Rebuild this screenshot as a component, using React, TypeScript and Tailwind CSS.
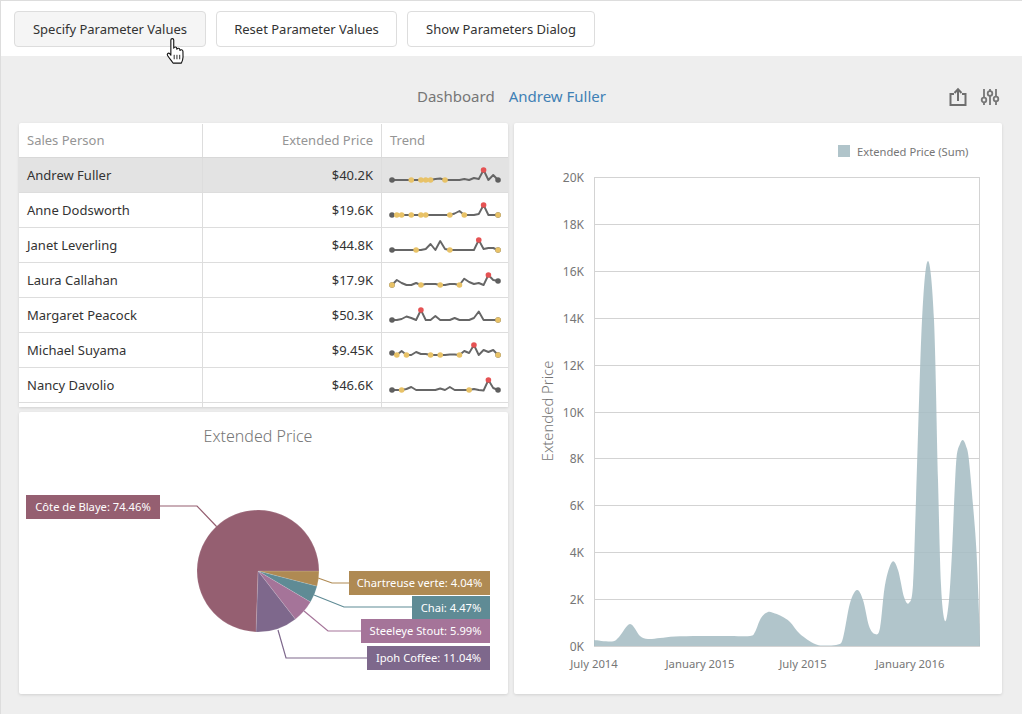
const font = { fontFamily: '"Noto Sans", "Open Sans", sans-serif' };

type Row = { name: string; price: string; ys: number[]; yellow: number[]; red: number };

const rows: Row[] = [
  { name: 'Andrew Fuller', price: '$40.2K', red: 19, yellow: [4, 6, 7, 8, 11],
    ys: [180, 180, 180, 180, 180, 180, 180, 180, 180, 179, 178.5, 180, 180, 180, 180, 179, 180, 178, 179, 170, 180, 175, 180] },
  { name: 'Anne Dodsworth', price: '$19.6K', red: 19, yellow: [1, 2, 4, 6, 7, 12, 15, 22],
    ys: [215, 215, 215, 215, 215, 215, 215, 215, 215, 215, 215, 215, 215, 213.5, 211, 215, 215, 215, 214, 205, 215, 215, 215] },
  { name: 'Janet Leverling', price: '$44.8K', red: 18, yellow: [5, 12, 22],
    ys: [250, 250, 250, 250, 250, 250, 250, 249, 244, 250, 241, 249, 250, 250, 250, 250, 250, 250, 240, 249, 248, 248, 250] },
  { name: 'Laura Callahan', price: '$17.9K', red: 20, yellow: [0, 6, 10, 14],
    ys: [285, 280, 283, 285, 285, 283, 285, 284, 284, 284, 285, 285, 284, 284, 285, 278.7, 282, 284, 283, 285, 275, 280, 281] },
  { name: 'Margaret Peacock', price: '$50.3K', red: 6, yellow: [22],
    ys: [320, 320, 319, 316.5, 318, 320, 310, 320, 320, 316, 320, 320, 320, 318, 320, 320, 320, 318, 311.5, 320, 320, 320, 320] },
  { name: 'Michael Suyama', price: '$9.45K', red: 17, yellow: [1, 3, 8, 10, 14, 22],
    ys: [353, 355, 351, 355, 355, 352, 354, 354, 355, 355, 355, 355, 354.5, 354.5, 355, 351, 353, 345, 355, 350, 352, 350, 355] },
  { name: 'Nancy Davolio', price: '$46.6K', red: 20, yellow: [2, 16],
    ys: [390, 390, 390, 389, 387, 390, 390, 390, 390, 390, 388.5, 390, 387, 390, 390, 390, 390, 389, 390, 390.5, 380, 388, 390] },
];

function Sparkline({ row, top }: { row: Row; top: number }) {
  const xs = row.ys.map((_, i) => 392 + i * 4.82);
  const last = row.ys.length - 1;
  return (
    <svg width="126" height="34" viewBox={`382 ${top} 126 34`}>
      <polyline
        points={row.ys.map((y, i) => `${xs[i]},${y}`).join(' ')}
        fill="none"
        stroke="#666666"
        strokeWidth="1.9"
        strokeLinejoin="round"
      />
      {[0, last].map((i) => (
        <circle key={i} cx={xs[i]} cy={row.ys[i]} r="2.8" fill="#5f5f5f" />
      ))}
      {row.yellow.map((i) => (
        <circle key={i} cx={xs[i]} cy={row.ys[i]} r="2.8" fill="#e8c267" />
      ))}
      <circle cx={xs[row.red]} cy={row.ys[row.red]} r="2.8" fill="#e55253" />
    </svg>
  );
}

function Grid() {
  return (
    <div className="h-[284px] overflow-hidden rounded-t-[2px] bg-white shadow-[0_1px_3px_rgba(0,0,0,0.12)]">
      <div className="flex h-[35px] border-b border-[#d8d8d8] pt-px text-[13px] text-[#959595]">
        <div className="flex w-[184px] items-center border-r border-[#dddddd] pl-2">Sales Person</div>
        <div className="flex w-[179px] items-center justify-end border-r border-[#dddddd] pr-2">Extended Price</div>
        <div className="flex flex-1 items-center pl-2">Trend</div>
      </div>
      {rows.map((row, i) => (
        <div
          key={row.name}
          className={`flex h-[35px] border-b border-[#dddddd] text-[13px] text-[#333333] ${i === 0 ? 'bg-[#e3e3e3]' : ''}`}
        >
          <div className="flex w-[184px] items-center border-r border-[#dddddd] pl-2 pt-px">{row.name}</div>
          <div className="flex w-[179px] items-center justify-end border-r border-[#dddddd] pr-2 pt-px">{row.price}</div>
          <div className="flex-1">
            <Sparkline row={row} top={158 + i * 35} />
          </div>
        </div>
      ))}
      <div className="flex h-[10px]">
        <div className="w-[184px] border-r border-[#dddddd]" />
        <div className="w-[179px] border-r border-[#dddddd]" />
      </div>
    </div>
  );
}

const slices = [
  { from: 0, to: 14.5, color: '#af8a53' },
  { from: 14.5, to: 30.6, color: '#5f8b95' },
  { from: 30.6, to: 52.2, color: '#a57499' },
  { from: 52.2, to: 91.9, color: '#7e688c' },
  { from: 91.9, to: 360, color: '#955f71' },
];

const pieLabels = [
  { text: 'Côte de Blaye: 74.46%', x: 26, y: 495, w: 134, color: '#955f71', line: '160,506 197,506 217,527' },
  { text: 'Chartreuse verte: 4.04%', x: 349, y: 571, w: 141, color: '#af8a53', line: '318,578 332,583 349,583' },
  { text: 'Chai: 4.47%', x: 412, y: 596, w: 78, color: '#5f8b95', line: '314,595 344,607 412,607' },
  { text: 'Steeleye Stout: 5.99%', x: 361, y: 619, w: 129, color: '#a57499', line: '304,611 328,631 361,631' },
  { text: 'Ipoh Coffee: 11.04%', x: 367, y: 646, w: 123, color: '#7e688c', line: '278,630 286,658 367,658' },
];

function slicePath(from: number, to: number) {
  const cx = 258;
  const cy = 571;
  const r = 61;
  const a = (from * Math.PI) / 180;
  const b = (to * Math.PI) / 180;
  const large = to - from > 180 ? 1 : 0;
  return `M${cx},${cy} L${cx + r * Math.cos(a)},${cy + r * Math.sin(a)} A${r},${r} 0 ${large} 1 ${cx + r * Math.cos(b)},${cy + r * Math.sin(b)} Z`;
}

function PieCard() {
  return (
    <div className="h-[282px] rounded-[2px] bg-white shadow-[0_1px_3px_rgba(0,0,0,0.12)]">
      <svg width="489" height="282" viewBox="19 412 489 282" style={font}>
        <text x="258" y="442" textAnchor="middle" fontSize="16" fontWeight="300" fill="#767676">
          Extended Price
        </text>
        {pieLabels.map((l) => (
          <polyline key={l.text} points={l.line} fill="none" stroke={l.color} strokeWidth="1.2" />
        ))}
        {slices.map((s) => (
          <path key={s.from} d={slicePath(s.from, s.to)} fill={s.color} stroke="#ffffff" strokeOpacity="0.25" strokeWidth="0.5" />
        ))}
        {pieLabels.map((l) => (
          <g key={l.text}>
            <rect x={l.x} y={l.y} width={l.w} height="24" fill={l.color} />
            <text x={l.x + l.w / 2} y={l.y + 16} textAnchor="middle" fontSize="11.2" fill="#ffffff">
              {l.text}
            </text>
          </g>
        ))}
      </svg>
    </div>
  );
}

const areaPoints: [number, number][] = [
  [594, 640], [612, 641.5], [619, 637], [630, 624], [640, 636], [648, 639], [660, 638], [675, 636.5],
  [700, 636], [730, 636], [750, 636], [755, 632], [761, 618], [768, 612], [775, 613.5], [782, 616.5], [790, 622], [800, 634], [815, 644],
  [825, 645.5], [838, 644.5], [843, 638], [850, 603], [857, 590], [863, 600], [869, 626], [875, 634],
  [880, 628], [885, 585], [892, 562], [898, 570], [904, 597], [909, 603], [913, 585], [916, 500],
  [922, 320], [928, 261], [934, 320], [938, 480], [941, 585], [945, 621], [949, 600], [952, 552],
  [954, 505], [956.5, 458], [960, 444], [963, 440], [966, 446], [968.7, 458], [973, 505], [976.5, 552], [979.5, 625],
];

function spline(pts: [number, number][]) {
  let d = `M${pts[0][0]},${pts[0][1]}`;
  for (let i = 0; i < pts.length - 1; i++) {
    const p0 = pts[Math.max(i - 1, 0)];
    const p1 = pts[i];
    const p2 = pts[i + 1];
    const p3 = pts[Math.min(i + 2, pts.length - 1)];
    d += ` C${p1[0] + (p2[0] - p0[0]) / 6},${p1[1] + (p2[1] - p0[1]) / 6} ${p2[0] - (p3[0] - p1[0]) / 6},${p2[1] - (p3[1] - p1[1]) / 6} ${p2[0]},${p2[1]}`;
  }
  return d;
}

const yTicks = [20, 18, 16, 14, 12, 10, 8, 6, 4, 2, 0];
const xTicks = [
  { text: 'July 2014', x: 594 },
  { text: 'January 2015', x: 700 },
  { text: 'July 2015', x: 803 },
  { text: 'January 2016', x: 910 },
];

function ChartCard() {
  return (
    <div className="h-[571px] w-[488px] rounded-[2px] bg-white shadow-[0_1px_3px_rgba(0,0,0,0.12)]">
      <svg width="488" height="571" viewBox="514 123 488 571" style={font}>
        <rect x="838" y="145" width="12" height="12" fill="#b0c4ca" />
        <text x="857" y="156" fontSize="11.2" fill="#767676">
          Extended Price (Sum)
        </text>
        <text transform="translate(553 411) rotate(-90)" textAnchor="middle" fontSize="14.8" fontWeight="300" fill="#767676">
          Extended Price
        </text>
        {yTicks.map((t) => {
          const y = 646 - t * 23.45;
          return (
            <g key={t}>
              <line x1="594" x2="980" y1={Math.round(y) + 0.5} y2={Math.round(y) + 0.5} stroke="#d3d3d3" />
              <text x="584" y={y + 5} textAnchor="end" fontSize="12" fill="#767676">
                {t}K
              </text>
            </g>
          );
        })}
        <line x1="594.5" x2="594.5" y1="177" y2="646" stroke="#d3d3d3" />
        <line x1="979.5" x2="979.5" y1="177" y2="646" stroke="#d3d3d3" />
        <path d={`${spline(areaPoints)} L980,646 L594,646 Z`} fill="#a6bdc4" fillOpacity="0.88" />
        {xTicks.map((t) => (
          <text key={t.text} x={t.x} y="668" textAnchor="middle" fontSize="11.3" fill="#767676">
            {t.text}
          </text>
        ))}
      </svg>
    </div>
  );
}

function HandCursor() {
  return (
    <svg className="absolute left-[163px] top-[35px]" width="27" height="31" viewBox="0 0 24 28">
      <path
        d="M6 3.5 C6 2 8.6 2 8.6 3.5 L8.6 11 C9 9.6 11.2 9.6 11.3 11 L11.4 12 C11.8 10.8 14 10.8 14.1 12.2 L14.2 13 C14.8 12 16.8 12.2 16.9 13.8 L17 19 C17 21 16.4 22.5 15.5 24.5 L8 24.5 C7 22.5 4.8 20.5 3 17.6 C2.2 16.2 3.8 14.8 5 16 L6 17.4 Z"
        fill="#ffffff"
        stroke="#111111"
        strokeWidth="1"
        strokeLinejoin="round"
      />
      <path d="M9 17 V21 M11.5 17 V21 M14 17 V21" stroke="#111111" strokeWidth="0.8" fill="none" />
    </svg>
  );
}

function ToolbarButton({ label, width, active }: { label: string; width: string; active?: boolean }) {
  return (
    <button
      className={`h-[36px] ${width} whitespace-nowrap rounded-[4px] border border-[#dddddd] pt-px text-[13px] text-[#333333] ${active ? 'bg-[#f5f5f5]' : 'bg-white'}`}
    >
      {label}
    </button>
  );
}

export default function App() {
  return (
    <div className="relative flex h-[714px] w-[1022px] flex-col border-l border-t border-[#dddddd] bg-[#eeeeee]" style={font}>
      <div className="flex h-[55px] items-start gap-[10px] bg-white pl-[13px] pt-[10px]">
        <ToolbarButton label="Specify Parameter Values" width="w-[192px]" active />
        <ToolbarButton label="Reset Parameter Values" width="w-[181px]" />
        <ToolbarButton label="Show Parameters Dialog" width="w-[188px]" />
      </div>
      <div className="flex h-[67px] items-center pl-[416px] pr-[22px] pt-[14px]">
        <span className="text-[15px] text-[#767676]">Dashboard</span>
        <span className="ml-[14px] text-[15px] text-[#3f80b5]">Andrew Fuller</span>
        <div className="ml-auto flex items-center gap-[12px]">
          <svg width="19" height="20" viewBox="0 0 19 20" fill="none" stroke="#6e6e6e" strokeWidth="2">
            <path d="M5 7 H1.5 V18 H16.5 V7 H13" />
            <path d="M9 14 V2.5" />
            <path d="M5.5 6 L9 2.2 L12.5 6" />
          </svg>
          <svg width="20" height="20" viewBox="0 0 20 20" fill="none" stroke="#767676" strokeWidth="1.8">
            <path d="M4 2 V10.5 M4 15.5 V18 M10 2 V4 M10 9 V18 M16 2 V9.5 M16 14.5 V18" />
            <circle cx="4" cy="13" r="2.3" />
            <circle cx="10" cy="6.5" r="2.3" />
            <circle cx="16" cy="12" r="2.3" />
          </svg>
        </div>
      </div>
      <div className="flex gap-[6px] pl-[18px]">
        <div className="flex w-[489px] flex-col gap-[5px]">
          <Grid />
          <PieCard />
        </div>
        <ChartCard />
      </div>
      <HandCursor />
    </div>
  );
}
